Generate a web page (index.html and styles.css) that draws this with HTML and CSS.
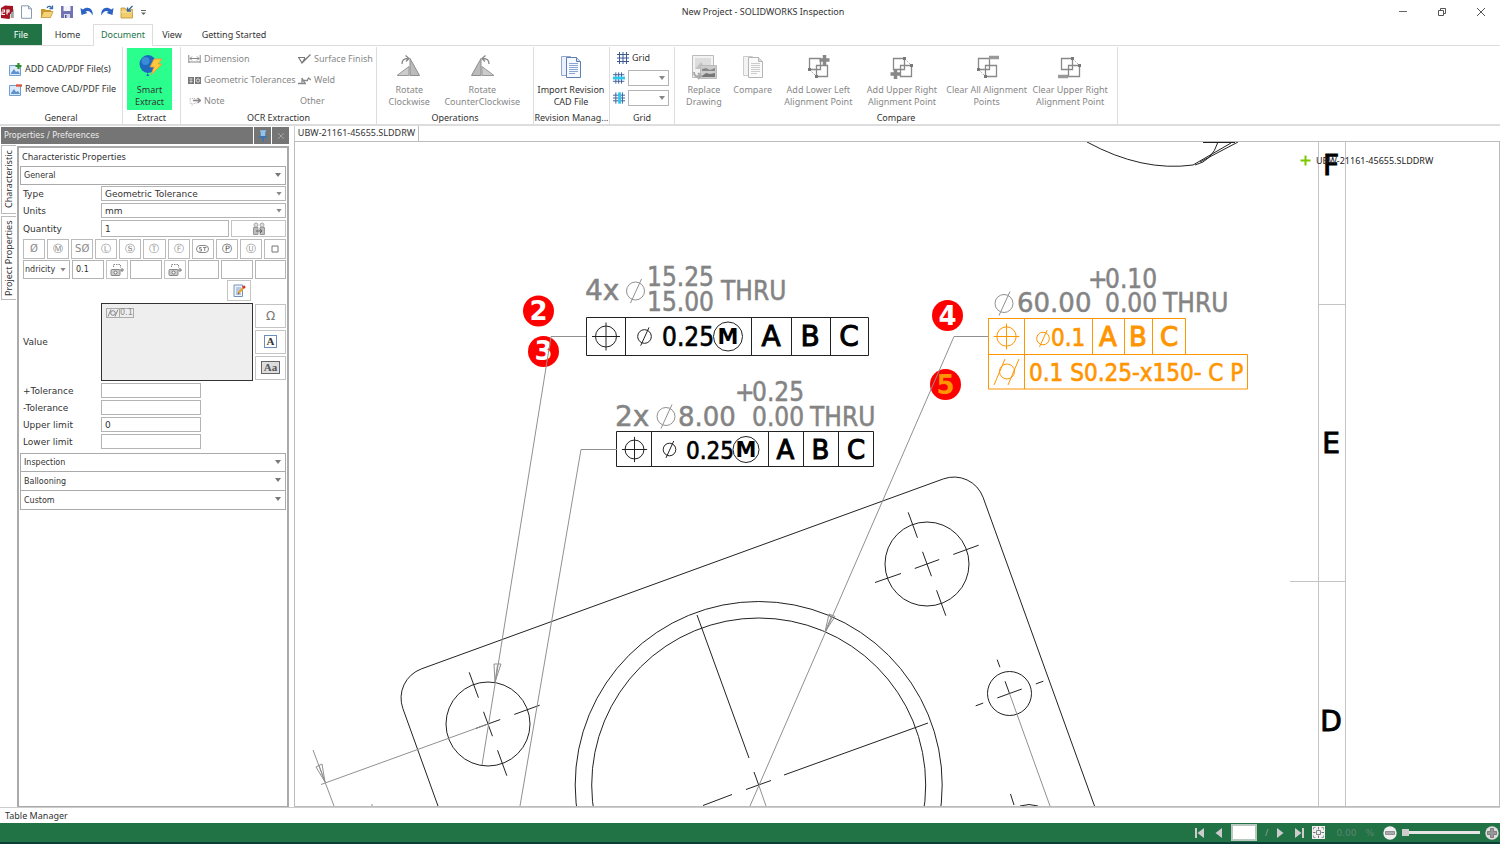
FILE: index.html
```html
<!DOCTYPE html>
<html lang="en">
<head>
<meta charset="utf-8">
<title>New Project - SOLIDWORKS Inspection</title>
<link rel="stylesheet" href="styles.css">
</head>
<body>
<div class="app">
  <header class="titlebar">
    <div class="quick">
      <svg class="logo" width="15" height="14" viewBox="0 0 15 14"><path d="M1 3l4-2.500 8 .5v10l-4 3-8-1z" fill="#a51220"/><path d="M2 5h2.500v2H2v2.500h3M7 9.500V5h2v2H7" fill="none" stroke="#fff" stroke-width="1.200"/><path d="M9.500 11l4-7v9h-4z" fill="#666"/><path d="M10.500 13V9m1.500 4V7" stroke="#ddd"/></svg>
      <button class="qb" aria-label="New"><svg width="14" height="14" viewBox="0 0 14 14"><path d="M1.500.8h7l3 3v9.500h-10z" fill="#fbfdff" stroke="#8a9ab0"/><path d="M8.500.8v3h3" fill="none" stroke="#8a9ab0"/></svg></button>
      <button class="qb" aria-label="Open"><svg width="14" height="14" viewBox="0 0 14 14"><path d="M1 4h4l1 1h5v7H1z" fill="#c9972b"/><path d="M1 12.500l2.500-6H13l-2.500 6z" fill="#f5d374" stroke="#b98a2a" stroke-width=".7"/><path d="M7 3c1-2 3-2 4.500-.5M12.500.5v3h-3" fill="none" stroke="#3668a8" stroke-width="1.300"/></svg></button>
      <button class="qb" aria-label="Save"><svg width="14" height="14" viewBox="0 0 14 14"><path d="M1 1h12v12H1z" fill="#7273b5"/><path d="M3.500 1h7v5h-7z" fill="#f4f4fb"/><path d="M4 9h6v4H4z" fill="#d8d8ec"/><path d="M5 10h1.500v3H5z" fill="#55569a"/></svg></button>
      <button class="qb" aria-label="Undo"><svg width="14" height="14" viewBox="0 0 14 14"><path d="M.5 3l1 7 6-2-2-1.200C8 5 11 6.500 12.500 10.500 14 4.500 8 0 2.800 4.500z" fill="#2b62c4"/></svg></button>
      <button class="qb" aria-label="Redo"><svg width="14" height="14" viewBox="0 0 14 14"><path d="M13.500 3l-1 7-6-2 2-1.200C6 5 3 6.500 1.500 10.500 0 4.500 6 0 11.200 4.500z" fill="#2b62c4"/></svg></button>
      <button class="qb" aria-label="Open project"><svg width="14" height="14" viewBox="0 0 14 14"><path d="M1 3h4l1 1.500h6.500V13H1z" fill="#f1cd6c" stroke="#c0922f" stroke-width=".8"/><path d="M1 7h11.500" stroke="#fae7ab"/><path d="M12.500 1L8 5.500M7.500 2.500v3.500H11" fill="none" stroke="#3668a8" stroke-width="1.400"/></svg></button>
      <button class="qb narrow" aria-label="Customize"><svg width="7" height="7" viewBox="0 0 7 7"><path d="M1 1.500h5" stroke="#666"/><path d="M1 3.500h5L3.500 6z" fill="#666"/></svg></button>
    </div>
    <h1 class="title">New Project - SOLIDWORKS Inspection</h1>
    <div class="winbtns">
      <button aria-label="Minimize"><svg width="10" height="10" viewBox="0 0 10 10"><path d="M1 4.500h8" stroke="#666"/></svg></button>
      <button aria-label="Restore"><svg width="10" height="10" viewBox="0 0 10 10"><path d="M1.500 3.500h5v5h-5zM3.500 3.500v-2h5v5h-2" fill="none" stroke="#555"/></svg></button>
      <button aria-label="Close"><svg width="10" height="10" viewBox="0 0 10 10"><path d="M1 1l8 8M9 1L1 9" stroke="#555"/></svg></button>
    </div>
  </header>

  <nav class="tabs">
    <button class="tab file">File</button><button class="tab home">Home</button><button class="tab doc">Document</button><button class="tab view">View</button><button class="tab start">Getting Started</button>
  </nav>

  <section class="ribbon">
    <div class="group g-general">
      <div class="body stack">
        <button class="small"><svg width="13" height="13" viewBox="0 0 13 13"><path d="M.5 2.500h11v10H.5z" fill="#dceafa" stroke="#6f9fd0"/><path d="M2 10l3-4 2 3 2-1 2 3H2z" fill="#5d94cf"/><path d="M9.500 0v6M6.500 3h6" stroke="#2c8a2f" stroke-width="2.200"/></svg>ADD CAD/PDF File(s)</button>
        <button class="small"><svg width="13" height="13" viewBox="0 0 13 13"><path d="M.5 2.500h11v10H.5z" fill="#dceafa" stroke="#6f9fd0"/><path d="M2 10l3-4 2 3 2-1 2 3H2z" fill="#5d94cf"/><path d="M7 2.500h6" stroke="#e0563f" stroke-width="2.400"/></svg>Remove CAD/PDF File</button>
      </div>
      <div class="caption">General</div>
    </div>
    <div class="group g-extract">
      <div class="body">
        <button class="big smart"><svg width="28" height="28" viewBox="0 0 28 28"><ellipse cx="12" cy="11" rx="8.500" ry="9" fill="#1c69bd"/><ellipse cx="9.500" cy="8" rx="4" ry="4" fill="#3c8bd8"/><path d="M11.500 20l-1.200 3h3z" fill="#1c69bd"/><path d="M18 6h8l-4 5h4L15 22l3-8h-4z" fill="#ffc73a" stroke="#e8963a" stroke-width=".8"/></svg><span>Smart<br>Extract</span></button>
      </div>
      <div class="caption">Extract</div>
    </div>
    <div class="group g-ocr">
      <div class="body ocr">
        <button class="small dim"><svg width="13" height="11" viewBox="0 0 13 11"><path d="M.8 1v8M12.200 1v8M2 4.500h9M4 2.500l-2 2 2 2M9 2.500l2 2-2 2M1 8h11" fill="none" stroke="#888"/></svg>Dimension</button>
        <button class="small dim"><svg width="13" height="11" viewBox="0 0 13 11"><path d="M0 3.500h7M1 4l3 5L12.500 .5M7 4L4 9" fill="none" stroke="#777" stroke-width="1.200"/></svg>Surface Finish</button>
        <button class="small dim"><svg width="13" height="11" viewBox="0 0 13 11"><path d="M0 2h6v7H0zM7 2h6v7H7z" fill="#777"/><path d="M1.500 4h3M1.500 6.500h3M3 3v5" stroke="#ccc"/><circle cx="10" cy="5.500" r="1.700" fill="none" stroke="#ddd"/></svg>Geometric Tolerances</button>
        <button class="small dim"><svg width="13" height="11" viewBox="0 0 13 11"><path d="M0 8.500h8M4 8.500V3l3 5.500M5 5.500h5M9 6l1.500-3L13 5" fill="none" stroke="#888" stroke-width="1.300"/></svg>Weld</button>
        <button class="small dim"><svg width="13" height="11" viewBox="0 0 13 11"><path d="M2 2.500h6v5H5l-1 2v-2H2z" fill="none" stroke="#bbb" stroke-dasharray="1 1"/><path d="M5 4.500h7M9.500 2l3 2.500-3 2.500" fill="none" stroke="#888" stroke-width="1.300"/></svg>Note</button>
        <button class="small dim other">Other</button>
      </div>
      <div class="caption">OCR Extraction</div>
    </div>
    <div class="group g-ops">
      <div class="body">
        <button class="big dim w56"><svg width="28" height="28" viewBox="0 0 28 28"><path d="M2 22.500l12-9v9z" fill="#ccc" stroke="#999"/><path d="M15 22.500v-17l9.500 17z" fill="#bbb" stroke="#8d8d8d"/><path d="M7 11c0-4 2-5.500 6-5.500M10.500 2.500L14 5.500l-3 3" fill="none" stroke="#888" stroke-width="1.300"/></svg><span>Rotate<br>Clockwise</span></button>
        <button class="big dim w94"><svg width="28" height="28" viewBox="0 0 28 28"><path d="M26 22.500l-12-9v9z" fill="#ccc" stroke="#999"/><path d="M13 22.500v-17l-9.500 17z" fill="#bbb" stroke="#8d8d8d"/><path d="M21 11c0-4-2-5.500-6-5.500M17.500 2.500L14 5.500l3 3" fill="none" stroke="#888" stroke-width="1.300"/></svg><span>Rotate<br>CounterClockwise</span></button>
      </div>
      <div class="caption">Operations</div>
    </div>
    <div class="group g-rev">
      <div class="body">
        <button class="big w74"><svg width="28" height="28" viewBox="0 0 28 28"><path d="M4.500 3.500h9l4 4v15h-13z" fill="#eaf1fb" stroke="#93a8cf"/><path d="M9.500 4.500h10l4 4v16h-14z" fill="#f6f9ff" stroke="#5f7fb8"/><path d="M19.500 4.500v4h4" fill="#cfdef5" stroke="#5f7fb8"/><path d="M12 10.500h9M12 12.500h9M12 14.500h9M12 16.500h9M12 18.500h9M12 20.500h6" stroke="#8aa5d4"/></svg><span>Import Revision<br>CAD File</span></button>
      </div>
      <div class="caption">Revision Manag...</div>
    </div>
    <div class="group g-grid">
      <div class="body gridctl">
        <button class="small"><svg width="12" height="12" viewBox="0 0 12 12"><path d="M2.500 0v12M6 0v12M9.500 0v12M0 2.500h12M0 6h12M0 9.500h12" stroke="#3b5a98"/></svg>Grid</button>
        <div class="gridrow"><svg width="13" height="12" viewBox="0 0 13 12"><path d="M3 0v12M6 0v12M9 0v12M0 2.500h12M0 9.500h12" stroke="#3b5a98"/><path d="M0 6h13" stroke="#2cc9ee" stroke-width="3"/></svg><span class="sel"><select aria-label="Grid rows"><option></option></select></span></div>
        <div class="gridrow"><svg width="13" height="12" viewBox="0 0 13 12"><path d="M3 0v12M10 0v12M0 3h13M0 6h13M0 9h13" stroke="#3b5a98"/><path d="M7 0v12" stroke="#2cc9ee" stroke-width="3"/></svg><span class="sel"><select aria-label="Grid columns"><option></option></select></span></div>
      </div>
      <div class="caption">Grid</div>
    </div>
    <div class="group g-compare">
      <div class="body">
        <button class="big dim w48"><svg width="28" height="28" viewBox="0 0 28 28"><path d="M2.500 2.500h21v22h-21z" fill="#f3f3f3" stroke="#bbb"/><path d="M5 5h16v11H5z" fill="#ddd"/><path d="M5 16l6-7 5 7z" fill="#c4c4c4"/><path d="M10.500 12.500h16v13h-16z" fill="#ccc" stroke="#bbb"/><path d="M12 16l4-1 4 2 5-2v3H12z" fill="#888"/><path d="M12 23l4-3 4 1 5-1v4H12z" fill="#777"/><path d="M4 19c0 4 2 5 6 4M8 20l3 3-3 3" fill="none" stroke="#aaa" stroke-width="2"/></svg><span>Replace<br>Drawing</span></button>
        <button class="big dim w50"><svg width="28" height="28" viewBox="0 0 28 28"><path d="M4.500 3.500h9l4 4v15h-13z" fill="#f3f3f3" stroke="#ccc"/><path d="M9.500 4.500h10l4 4v16h-14z" fill="#fafafa" stroke="#b5b5b5"/><path d="M19.500 4.500v4h4" fill="#ddd" stroke="#b5b5b5"/><path d="M12 10.500h9M12 12.500h9M12 14.500h9M12 16.500h9M12 18.500h9M12 20.500h6" stroke="#ccc"/></svg><span>Compare</span></button>
        <button class="big dim w82"><svg width="28" height="28" viewBox="0 0 28 28"><path d="M5.500 5.500h11v11h-11zM12.500 12.500h11v11h-11z" fill="none" stroke="#888" stroke-width="1.300"/><path d="M5.500 16.500l7 7" stroke="#999" stroke-dasharray="1.500 1.500"/><path d="M4 15h3v3H4zM11 22h3v3h-3z" fill="#777"/><path d="M20.500 2v10M15.500 7h10" stroke="#888" stroke-width="3.500"/></svg><span>Add Lower Left<br>Alignment Point</span></button>
        <button class="big dim w86"><svg width="28" height="28" viewBox="0 0 28 28"><path d="M5.500 5.500h11v11h-11zM12.500 12.500h11v11h-11z" fill="none" stroke="#888" stroke-width="1.300"/><path d="M16.500 5.500l7 7" stroke="#999" stroke-dasharray="1.500 1.500"/><path d="M15 4h3v3h-3zM22 11h3v3h-3z" fill="#777"/><path d="M7.500 16v10M2.500 21h10" stroke="#888" stroke-width="3.500"/></svg><span>Add Upper Right<br>Alignment Point</span></button>
        <button class="big dim w84"><svg width="28" height="28" viewBox="0 0 28 28"><path d="M5.500 5.500h11v11h-11zM12.500 12.500h11v11h-11z" fill="none" stroke="#888" stroke-width="1.300"/><path d="M5.500 16.500l7 7" stroke="#999" stroke-dasharray="1.500 1.500"/><path d="M4 15h3v3H4zM11 22h3v3h-3z" fill="#777"/><path d="M16 4.500h10" stroke="#999" stroke-width="3.500"/></svg><span>Clear All Alignment<br>Points</span></button>
        <button class="big dim w84"><svg width="28" height="28" viewBox="0 0 28 28"><path d="M5.500 5.500h11v11h-11zM12.500 12.500h11v11h-11z" fill="none" stroke="#888" stroke-width="1.300"/><path d="M16.500 5.500l7 7" stroke="#999" stroke-dasharray="1.500 1.500"/><path d="M15 4h3v3h-3zM22 11h3v3h-3z" fill="#777"/><path d="M2 23.500h10" stroke="#999" stroke-width="3.500"/></svg><span>Clear Upper Right<br>Alignment Point</span></button>
      </div>
      <div class="caption">Compare</div>
    </div>
  </section>

  <main class="work">
    <aside class="dock">
      <div class="dockhead"><span class="docktitle">Properties / Preferences</span>
        <button aria-label="Pin"><svg width="10" height="12" viewBox="0 0 10 12"><path d="M2 1h6M3.500 1v5M6.500 1v5M5 1v5" stroke="#8fc4f2" stroke-width="1.500"/><path d="M1 7h8M5 7v4.500" stroke="#2f74bd" stroke-width="1.500"/></svg></button>
        <button aria-label="Close panel"><svg width="8" height="8" viewBox="0 0 8 8"><path d="M1 1l6 6M7 1L1 7" stroke="#a2a2a2"/></svg></button>
      </div>
      <div class="dockbody">
        <div class="vtabs"><button class="vtab one">Characteristic</button><button class="vtab two">Project Properties</button></div>
        <form class="props">
          <h2 class="phead">Characteristic Properties</h2>
          <button type="button" class="fold">General</button>
          <div class="fields">
            <div class="row"><label for="type">Type</label><span class="sel"><select id="type"><option>Geometric Tolerance</option></select></span></div>
            <div class="row"><label for="units">Units</label><span class="sel"><select id="units"><option>mm</option></select></span></div>
            <div class="row qty"><label for="qty">Quantity</label><input id="qty" value="1"><button type="button" class="btn" aria-label="Find"><svg width="14" height="14" viewBox="0 0 14 14"><circle cx="4" cy="3" r="2" fill="#ddd" stroke="#aaa"/><circle cx="10" cy="3" r="2" fill="#ddd" stroke="#aaa"/><path d="M1.500 5.500H6v7H1.500zM8 5.500h4.500v7H8z" fill="#bbb" stroke="#999"/><path d="M4 9h6M8 7l2 2-2 2" fill="none" stroke="#666"/></svg></button></div>
            <div class="symbols">
              <button type="button">Ø</button><button type="button">Ⓜ</button><button type="button">SØ</button><button type="button">Ⓛ</button><button type="button">Ⓢ</button><button type="button">Ⓣ</button><button type="button">Ⓕ</button><button type="button" aria-label="ST"><svg width="13" height="8" viewBox="0 0 13 8"><rect x=".5" y=".5" width="12" height="7" rx="3.500" fill="none" stroke="#888"/><path d="M5.500 2.500H3.500v1.500h2v2h-2M7 2.500h3.500M8.700 2.500V6" fill="none" stroke="#888"/></svg></button><button type="button" class="strong">Ⓟ</button><button type="button">Ⓤ</button><button type="button" aria-label="Square"><svg width="8" height="8" viewBox="0 0 8 8"><path d="M1 1h6v6H1z" fill="none" stroke="#777"/></svg></button>
            </div>
            <div class="tolrow">
              <span class="sel"><select aria-label="Symbol"><option>ndricity</option></select></span><input aria-label="Tolerance" value="0.1">
              <button type="button" class="btn" aria-label="Capture tolerance"><svg width="14" height="14" viewBox="0 0 14 14"><path d="M3.500 4V1.500h7V5" fill="none" stroke="#888" stroke-dasharray="1.500 1"/><rect x="1" y="6.500" width="9" height="6" rx="1" fill="#ccc" stroke="#888"/><circle cx="5.500" cy="9.500" r="1.500" fill="#fff" stroke="#777"/><path d="M12 5v4M10 7h4" stroke="#777"/></svg></button><input aria-label="Datum 1">
              <button type="button" class="btn" aria-label="Capture datum"><svg width="14" height="14" viewBox="0 0 14 14"><path d="M3.500 4V1.500h7V5" fill="none" stroke="#888" stroke-dasharray="1.500 1"/><rect x="1" y="6.500" width="9" height="6" rx="1" fill="#ccc" stroke="#888"/><circle cx="5.500" cy="9.500" r="1.500" fill="#fff" stroke="#777"/><path d="M12 5v4M10 7h4" stroke="#777"/></svg></button><input aria-label="Datum 2"><input aria-label="Datum 3"><input aria-label="Datum 4">
            </div>
            <div class="editrow"><button type="button" class="btn" aria-label="Edit"><svg width="13" height="13" viewBox="0 0 13 13"><path d="M1 1h8.500v11.500H1z" fill="#eef4fc" stroke="#7490bb"/><path d="M3 4h5M3 6h4M3 8h3M3 10h5" stroke="#7c9ccb"/><path d="M5.500 9l5-5.500" stroke="#e4a62f" stroke-width="2.200"/><path d="M4.500 10.500l1-2 1 1z" fill="#444"/><circle cx="11" cy="3" r="1.500" fill="#d8322a"/></svg></button></div>
            <div class="valrow"><label for="val">Value</label>
              <output class="value" id="val"><span class="frame"><svg width="12" height="8" viewBox="0 0 12 8"><path d="M1 7.500L4 .5M8 7.500l3-7" stroke="#888"/><circle cx="6" cy="4" r="2.300" fill="none" stroke="#888"/></svg><b>0.1</b></span></output>
              <div class="valbtns"><button type="button" class="btn omega">Ω</button><button type="button" class="btn"><span class="glyph blue">A</span></button><button type="button" class="btn"><span class="glyph gray">Aa</span></button></div>
            </div>
            <div class="row tol"><label for="pt">+Tolerance</label><input id="pt"></div>
            <div class="row tol"><label for="mt">-Tolerance</label><input id="mt"></div>
            <div class="row tol"><label for="ul">Upper limit</label><input id="ul" value="0"></div>
            <div class="row tol"><label for="ll">Lower limit</label><input id="ll"></div>
          </div>
          <button type="button" class="fold">Inspection</button>
          <button type="button" class="fold">Ballooning</button>
          <button type="button" class="fold">Custom</button>
        </form>
      </div>
    </aside>
    <section class="docarea">
      <div class="doctabs"><button class="doctab">UBW-21161-45655.SLDDRW</button></div>
      <div class="canvas">
        <svg class="drawing" width="100%" height="100%">
          <defs>
            <g id="axes"><path d="M-13 0h26M28 0h27M0-55v27M0-13v26M0 28v27"/></g>
            <g id="pos"><circle r="10.500"/><path d="M-14 0h28M0-14v28"/></g>
            <g id="dia"><circle r="9"/><path d="M-5 12L6-12"/></g>
          </defs>
          <g transform="translate(-295 -142)">
            <g class="sheet"><path d="M1318.500 142v664M1345.500 142v664M1318 304.500h28M1290 581.500h56"/></g>
            <g class="part">
              <path d="M438 806L402.900 708.600A31 31 0 0 1 421.400 668.900L943.400 478.900A31 31 0 0 1 983.100 497.400L1094.500 806"/>
              <circle cx="488" cy="724" r="42"/><circle cx="927" cy="564" r="42"/><circle cx="1009.500" cy="693.500" r="22"/>
              <circle cx="758.700" cy="785" r="183.500"/><circle cx="758.700" cy="785" r="167"/>
              <use href="#axes" transform="translate(488 724) rotate(-20)"/>
              <use href="#axes" transform="translate(927 564) rotate(-20)"/><path d="M875 582.500L901 573.500"/>
              <path transform="translate(1009.500 693.500) rotate(-20)" d="M-13 0h26M0-13V0M28 0h8M-36 0h8M0-36v8"/>
              <path d="M697 615L749 758M784 775L928 723M703 805.500L732 794.500M746 789.500L771 780.500M754 772L758.700 785M1010.500 794L1014 805M1020 806q9-3 18 0"/>
              <path d="M1087 142Q1142 172 1193 165L1231 143M1195 165Q1212 161 1218 142M1200 162L1238 142M1203 142.500h32"/>
            </g>
            <g class="note">
              <text x="585" y="300" class="wide">4x</text><text x="647" y="286">15.25</text><text x="647" y="311">15.00</text><text x="721" y="300">THRU</text>
              <text x="615" y="426" class="wide">2x</text><text x="678" y="426" class="mid">8.00</text><text x="735" y="401">+</text><text x="752" y="401">0.25</text><text x="752" y="426">0.00</text><text x="810" y="426">THRU</text>
              <text x="1017" y="312" class="mid">60.00</text><text x="1088" y="288">+</text><text x="1105" y="288">0.10</text><text x="1105" y="312">0.00</text><text x="1163" y="312">THRU</text>
            </g>
            <g class="lead"><use href="#dia" x="635.500" y="291"/><use href="#dia" x="666" y="416.500"/><use href="#dia" x="1004" y="303.500"/></g>
            <g class="fcf">
              <path d="M586.500 317.500h282v38h-282zM625.500 317v39M751.500 317v39M791.500 317v39M830.500 317v39"/>
              <use href="#pos" x="606" y="336.500"/><use href="#dia" transform="translate(644.500 336.500) scale(.76)"/><circle cx="728" cy="336.500" r="14.500"/>
              <path d="M616.500 431.500h257v35h-257zM651.500 431v36M768.500 431v36M803.500 431v36M838.500 431v36"/>
              <use href="#pos" transform="translate(634.500 449.500) scale(.9)"/><use href="#dia" transform="translate(669.500 449.500) scale(.7)"/><circle cx="746" cy="449.500" r="13"/>
            </g>
            <g class="fcftext">
              <text x="662" y="346" class="sz26">0.25</text><text x="728" y="344" class="em">M</text><text x="771" y="346" class="ltr">A</text><text x="810" y="346" class="ltr">B</text><text x="849" y="346" class="ltr">C</text>
              <text x="686" y="459">0.25</text><text x="746" y="457" class="em">M</text><text x="785.500" y="459" class="ltr s">A</text><text x="820.500" y="459" class="ltr s">B</text><text x="856" y="459" class="ltr s">C</text>
              <text x="1331" y="175" class="ltr">F</text><text x="1331" y="453" class="ltr">E</text><text x="1331" y="731" class="ltr">D</text>
            </g>
            <g class="fcf hot">
              <path d="M988.500 318.500h197v35.500M1092.500 318v36M1124.500 318v36M1152.500 318v36M988.500 354.500h259v34.500h-259zM988.500 318v70M1024.500 318v71"/>
              <use href="#pos" transform="translate(1006.500 336.500) scale(.92)"/><use href="#dia" transform="translate(1043 338.500) scale(.7)"/>
              <circle cx="1007" cy="371.500" r="7.500"/><path d="M994 385L1005 359M1008 385L1019 359"/>
            </g>
            <g class="fcftext hottext">
              <text x="1051" y="346">0.1</text><text x="1108" y="346" class="ltr s">A</text><text x="1138" y="346" class="ltr s">B</text><text x="1169" y="346" class="ltr s">C</text>
              <text x="1029" y="381">0.1 S0.25-x150- C P</text>
            </g>
            <g class="balloons">
              <circle cx="538.500" cy="311" r="15.500"/><circle cx="543.500" cy="351.500" r="15.500"/><circle cx="947.500" cy="315.500" r="15.500"/><circle cx="945.500" cy="384.500" r="15.500"/>
              <text x="538.500" y="320">2</text><text x="543.500" y="360">3</text><text x="947.500" y="325">4</text><text x="945.500" y="394" class="sel5">5</text>
            </g>
            <g class="lead">
              <path d="M586 336.500H551L482 765M495 682l-1-18h7zM497.500 665L495 682M617 449.500H581L520 806"/>
              <path d="M488 724L321 784.500M313 750L334 806M325 782L316 767L322 764zM319 765.500L325 782M371 805h2"/>
              <path d="M825 632L829 614L835 616.500zM832 615L825 632M758.700 785L766 806M1009.500 693.500L1050 806M988 336.500H954L750 806"/>
            </g>
            <path d="M1300.500 160.500h10M1305.500 155.500v10" stroke="#7cc800" stroke-width="2" fill="none"/>
            <text x="1316" y="164" class="doclabel">UBW-21161-45655.SLDDRW</text>
          </g>
        </svg>
      </div>
    </section>
  </main>

  <div class="manager">Table Manager</div>
  <footer class="status">
    <button aria-label="First page"><svg width="12" height="12" viewBox="0 0 12 12"><path d="M2 1v10" stroke="#ccc" stroke-width="2"/><path d="M10 1v10L3.500 6z" fill="#ccc"/></svg></button>
    <button aria-label="Previous page"><svg width="12" height="12" viewBox="0 0 12 12"><path d="M9 1v10L2.500 6z" fill="#ccc"/></svg></button>
    <input class="page" aria-label="Page"><span class="slash">/</span>
    <button aria-label="Next page"><svg width="12" height="12" viewBox="0 0 12 12"><path d="M3 1v10l6.500-5z" fill="#ccc"/></svg></button>
    <button aria-label="Last page"><svg width="12" height="12" viewBox="0 0 12 12"><path d="M10 1v10" stroke="#ccc" stroke-width="2"/><path d="M2 1v10l6.500-5z" fill="#ccc"/></svg></button>
    <button aria-label="Fit"><svg width="13" height="13" viewBox="0 0 13 13"><path d="M0 0h13v13H0z" fill="#f0f0f0"/><path d="M4.500 4.500h4v4h-4z" fill="none" stroke="#888"/><path d="M6.500 1v2.500M6.500 9.500V12M1 6.500h2.500M9.500 6.500H12" stroke="#777"/><path d="M1.500 3.500v-2h2M9.500 1.500h2v2M1.500 9.500v2h2M9.500 11.500h2v-2" fill="none" stroke="#999"/></svg></button>
    <span class="pct">0.00</span><span class="pct sign">%</span>
    <button aria-label="Zoom out"><svg width="14" height="14" viewBox="0 0 14 14"><circle cx="7" cy="7" r="6.700" fill="#eee"/><path d="M2.500 5.500h9v3h-9z" fill="#aaa" stroke="#777" stroke-width=".7"/></svg></button>
    <input class="zoom" type="range" min="0" max="100" value="0" aria-label="Zoom">
    <button aria-label="Zoom in"><svg width="14" height="14" viewBox="0 0 14 14"><circle cx="7" cy="7" r="6.700" fill="#ddd"/><path d="M5.500 2.500h3v3h3v3h-3v3h-3v-3h-3v-3h3z" fill="#999" stroke="#666" stroke-width=".7"/></svg></button>
  </footer>
</div>
</body>
</html>
```
FILE: styles.css
```css
* { box-sizing: border-box; }
html, body { height: 100%; }
body { margin: 0; font: 9px/12px "Noto Sans", "Open Sans", sans-serif; color: #333; background: #fff; overflow: hidden; }
button, input, select { font: inherit; color: inherit; margin: 0; padding: 0; border: 0; background: none; border-radius: 0; }
button svg { flex: none; }
.app { display: flex; flex-direction: column; height: 100vh; }

.titlebar { display: grid; grid-template-columns: 1fr auto 1fr; align-items: center; height: 24px; }
.quick { display: flex; align-items: center; }
.logo { margin: 0 2px 0 0; }
.qb { width: 20px; height: 20px; display: flex; align-items: center; justify-content: center; }
.qb.narrow { width: 12px; }
.title { margin: 0; padding-left: 26px; font: inherit; }
.winbtns { display: flex; justify-content: flex-end; }
.winbtns button { width: 39px; height: 22px; display: flex; align-items: center; justify-content: center; }

.tabs { display: flex; height: 22px; border-bottom: 1px solid #ddd; }
.tab { height: 21px; }
.tab.file { width: 42px; background: #217346; color: #fff; }
.tab.home { width: 51px; }
.tab.doc { width: 60px; height: 22px; padding-bottom: 2px; border: 1px solid #ddd; border-bottom: 0; background: #fff; color: #217346; }
.tab.view { width: 38px; }
.tab.start { width: 86px; }

.ribbon { display: flex; height: 80px; padding-top: 1px; border-bottom: 2px solid #ddd; }
.group { display: flex; flex-direction: column; border-right: 1px solid #ddd; flex: none; }
.body { display: flex; flex: none; height: 64px; padding: 1px 5px; }
.caption { text-align: center; line-height: 14px; white-space: nowrap; }
.g-general { width: 123px; }
.g-extract { width: 58px; }
.g-extract .body { padding: 1px 4px; }
.g-ocr { width: 196px; }
.g-ops { width: 157px; }
.g-rev { width: 76px; }
.g-rev .body { padding: 1px 0; }
.g-grid { width: 65px; }
.g-compare { width: 443px; }
.small { display: flex; align-items: center; gap: 3px; white-space: nowrap; height: 20px; }
.dim { color: #888; }
.g-general .stack { flex-direction: column; justify-content: center; padding-left: 9px; }
.big { display: flex; flex-direction: column; align-items: center; gap: 3px; height: 62px; padding-top: 5px; white-space: nowrap; }
.smart { width: 45px; background: #2aff8d; }
.w48 { width: 48px; } .w50 { width: 50px; } .w56 { width: 56px; } .w74 { width: 74px; }
.w82 { width: 82px; } .w84 { width: 84px; } .w86 { width: 86px; } .w94 { width: 94px; }
.g-ocr .ocr { display: grid; grid-template-columns: 110px 1fr; padding: 2px 0 0 7px; grid-auto-rows: 20px; row-gap: 1px; align-content: start; }
.other { padding-left: 2px; }
.g-grid .gridctl { flex-direction: column; padding-left: 3px; }
.gridctl .small { padding-left: 4px; }
.gridrow { display: flex; align-items: center; gap: 3px; height: 20px; }
.gridrow .sel { width: 43px; height: 16px; }

.sel { position: relative; display: block; border: 1px solid #b4b4b4; }
.sel::after { content: ""; position: absolute; right: 3px; top: 50%; margin-top: -2px; width: 6px; height: 4px; background: #888; clip-path: polygon(0 0, 100% 0, 50% 100%); pointer-events: none; }
.sel select { display: block; appearance: none; width: 100%; height: 100%; padding-left: 3px; }

.work { display: flex; flex: 1; min-height: 0; }
.dock { width: 289px; display: flex; flex-direction: column; font: 8px/12px "DejaVu Sans", sans-serif; padding: 1px 0 0 1px; }
.dockhead { display: flex; gap: 1px; height: 17px; }
.dockhead > * { background: #757575; }
.docktitle { flex: 1; color: #eee; line-height: 17px; padding-left: 3px; }
.dockhead button { width: 17px; display: flex; align-items: center; justify-content: center; }
.dockbody { display: flex; flex: 1; min-height: 0; }
.vtabs { width: 16px; font: 9px/12px "Noto Sans", sans-serif; padding-top: 1px; }
.vtab { display: block; width: 15px; writing-mode: vertical-rl; transform: rotate(180deg); border: 1px solid #bbb; margin-bottom: 2px; background: #fff; }
.vtab.one { height: 69px; border-left: 0; }
.vtab.two { height: 84px; border-left: 0; }
.props { flex: 1; margin-top: 2px; padding: 0 1px; border: 2px solid #aaa; border-width: 2px 2px 1px; display: flex; flex-direction: column; }
.phead { margin: 0; padding-left: 2px; font: 9px/18px "Noto Sans", sans-serif; height: 18px; }
.fold { position: relative; flex: none; height: 19px; line-height: 17px; text-align: left; padding-left: 3px; border: 1px solid #aaa; }
.fold + .fold { border-top: 0; }
.fold::after { content: ""; position: absolute; right: 4px; top: 6px; width: 6px; height: 4px; background: #777; clip-path: polygon(0 0, 100% 0, 50% 100%); }
.fields { padding: 0 0 3px 3px; font-size: 9px; }
.row { display: grid; grid-template-columns: 78px 1fr; height: 17px; align-items: center; }
.row .sel { height: 15px; }
.row.qty { grid-template-columns: 78px 1fr 57px; height: 19px; }
.row.qty .btn { margin-left: 2px; height: 17px; }
.fields input { min-width: 0; width: 100%; height: 15px; border: 1px solid #b4b4b4; padding-left: 3px; }
.row.qty input { height: 17px; }
.row.tol { grid-template-columns: 78px 100px; }
.btn { display: flex; align-items: center; justify-content: center; border: 1px solid #c4c4c4; }
.symbols { display: grid; grid-template-columns: repeat(11, 1fr); gap: 2px; height: 20px; margin-top: 1px; }
.symbols button { border: 1px solid #bbb; font-size: 10px; line-height: 16px; color: #888; display: flex; align-items: center; justify-content: center; }
.symbols .strong { color: #333; }
.tolrow { display: grid; grid-template-columns: 47px 32px 22px 32px 22px 1fr 1fr 1fr; gap: 2px; height: 20px; margin-top: 1px; }
.tolrow input, .tolrow .sel { height: 19px; font-size: 8px; }
.tolrow .btn { height: 19px; }
.tolrow .sel select { padding-left: 1px; }
.editrow { display: flex; justify-content: flex-end; padding-right: 35px; height: 22px; }
.editrow .btn { width: 24px; height: 21px; }
.valrow { display: grid; grid-template-columns: 78px 1fr 33px; align-items: center; height: 79px; margin-bottom: 1px; }
.value { display: block; height: 78px; background: #eee; border: 1px solid #333; padding: 4px; font-size: 8px; }
.frame { display: inline-flex; align-items: center; height: 10px; border: 1px solid #aaa; color: #888; }
.frame b { font-weight: 400; border-left: 1px solid #aaa; line-height: 8px; }
.valbtns { display: grid; gap: 2px; padding-left: 2px; }
.valbtns .btn { height: 24px; font-size: 12px; }
.valbtns .omega { color: #777; }
.glyph { font: bold 11px/11px "Liberation Serif", serif; border: 1px solid #6b8cbe; padding: 0 2px; }
.glyph.gray { border-color: #666; background: #ddd; color: #555; }

.docarea { flex: 1; min-width: 0; margin-left: 5px; display: flex; flex-direction: column; }
.doctabs { display: flex; height: 15px; }
.doctab { width: 125px; padding-bottom: 1px; border-right: 1px solid #bbb; border-left: 1px solid #ccc; white-space: nowrap; line-height: 14px; }
.canvas { flex: 1; min-height: 0; border: 1px solid #bbb; overflow: hidden; }
.drawing { display: block; }
.drawing path, .drawing circle { vector-effect: non-scaling-stroke; }
.part, .fcf { fill: none; stroke: #222; }
.lead { fill: none; stroke: #909090; }
.sheet { fill: none; stroke: #c4c4c4; }
.note { fill: #848484; stroke: #848484; stroke-width: 0.5; font: 26px "DejaVu Sans Condensed", "DejaVu Sans", sans-serif; }
.note .mid { font: 26px "DejaVu Sans", sans-serif; }
.note .wide { font: 28px "DejaVu Sans", sans-serif; }
.fcftext { fill: #000; stroke: #000; stroke-width: 0.6; font: 24px "DejaVu Sans Condensed", "DejaVu Sans", sans-serif; }
.fcftext .sz26 { font-size: 26px; }
.fcftext .ltr { font: 28px "DejaVu Sans", sans-serif; text-anchor: middle; stroke-width: 1; }
.fcftext .ltr.s { font-size: 26px; }
.fcftext .em { font: bold 21px "DejaVu Sans", sans-serif; text-anchor: middle; stroke-width: 0; }
.fcf.hot { stroke: #ff9500; }
.fcftext.hottext { fill: #ff9500; stroke: #ff9500; }
.balloons { fill: #f00; font: bold 26px "DejaVu Sans", sans-serif; text-anchor: middle; }
.balloons text { fill: #fff; }
.balloons .sel5 { fill: #ff9500; }
.doclabel { font: 9px "Noto Sans", sans-serif; fill: #222; }

.manager { height: 16px; line-height: 16px; padding-left: 5px; border-top: 1px solid #ccc; }
.status { display: flex; align-items: center; justify-content: flex-end; gap: 5px; height: 21px; background: #217346; border-bottom: 2px solid #0b4038; padding-right: 1px; }
.status button { display: flex; align-items: center; justify-content: center; min-width: 14px; }
.page { width: 26px; height: 17px; border: 2px solid #b9c9c0; }
.status .page { background: #fff; }
.slash { color: #8fa597; padding-left: 3px; }
.pct { font: 9px/12px "DejaVu Sans", sans-serif; color: #5f8270; padding-left: 6px; }
.pct.sign { padding: 0 4px; }
.zoom { appearance: none; width: 78px; height: 8px; }
.zoom::-webkit-slider-runnable-track { height: 3px; background: #e5e5e5; }
.zoom::-webkit-slider-thumb { appearance: none; width: 7px; height: 7px; margin-top: -2px; background: #ccc; }
```
